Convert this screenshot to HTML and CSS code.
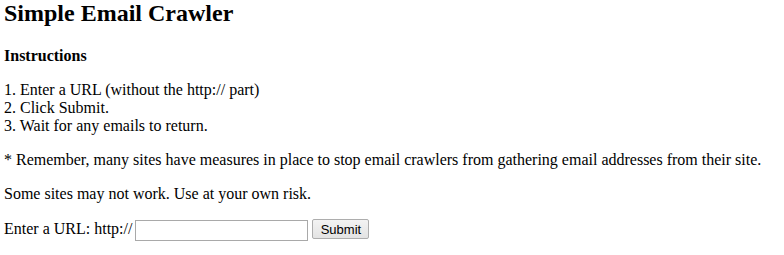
FILE: index.html
```html
<!DOCTYPE html>
<html lang="en">
<head>
<meta charset="UTF-8">
<title>Simple Email Crawler</title>
<link rel="stylesheet" href="styles.css">
</head>
<body>
  <h2 class="title">Simple Email Crawler</h2>

  <p class="label"><strong>Instructions</strong></p>
  <p>
    1. Enter a URL (without the http:// part)<br>
    2. Click Submit.<br>
    3. Wait for any emails to return.
  </p>

  <p>* Remember, many sites have measures in place to stop email crawlers from gathering email addresses from their site.</p>
  <p>Some sites may not work. Use at your own risk.</p>

  <form class="crawl-form" onsubmit="return false;">
    Enter a URL: http://
    <input type="text" class="url-input" name="url">
    <input type="submit" class="submit-btn" value="Submit">
  </form>
</body>
</html>
```

FILE: styles.css
```css
body {
  font-family: "Liberation Serif", "Times New Roman", serif;
  font-size: 16px;
  color: #000;
  background: #fff;
  margin: 0;
  padding: 0 4px;
}

.title {
  font-size: 24px;
  margin: 0 0 20px 0;
}

p {
  margin: 16px 0;
  line-height: 18px;
}

.label {
  margin-top: 0;
}

.crawl-form {
  margin: 0;
  line-height: 18px;
}

.url-input {
  width: 173px;
  height: 21px;
  box-sizing: border-box;
  border: 1px solid #a9a9a9;
  padding: 1px 2px;
  margin: 0 0 0 -1px;
  font-family: "Liberation Sans", Arial, sans-serif;
  font-size: 13px;
  vertical-align: -1px;
}

.submit-btn {
  width: 57px;
  height: 20px;
  box-sizing: border-box;
  border: 1px solid #adadad;
  border-radius: 2px;
  background: linear-gradient(#f3f3f3, #e3e3e3);
  font-family: "Liberation Sans", Arial, sans-serif;
  font-size: 13px;
  color: #000;
  padding: 0 6px;
  margin: 0;
}
```
